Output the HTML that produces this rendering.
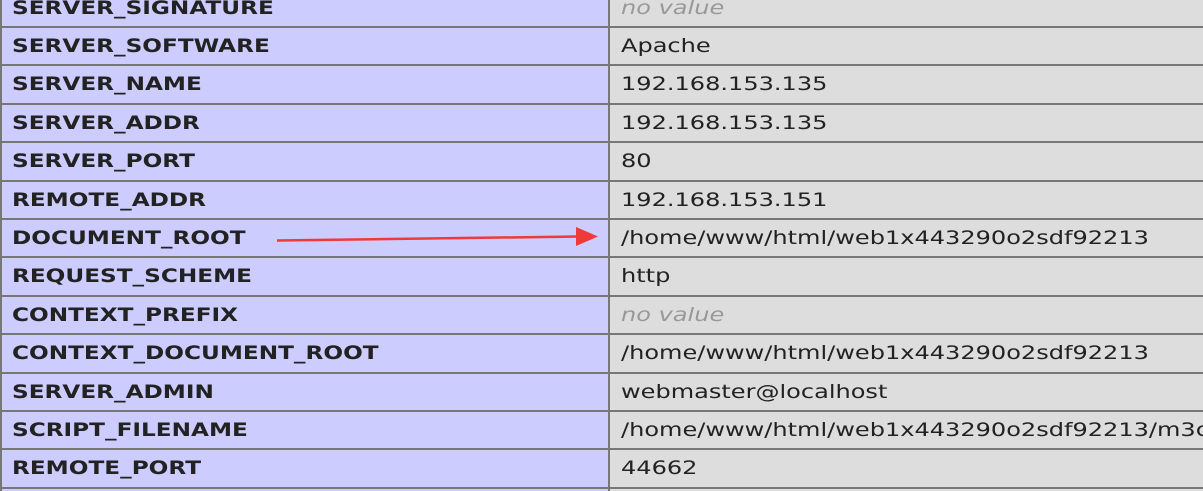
<!DOCTYPE html>
<html><head><style>
html,body{margin:0;padding:0;width:1203px;height:491px;overflow:hidden;background:#fff;position:relative;}
.r{position:absolute;left:0;width:1203px;height:38.4px;overflow:hidden;}
.l{position:absolute;left:0;top:0;width:606px;height:36.4px;background:#ccccff;border:1px solid #777;border-width:2px 0 0 2px;box-sizing:content-box;}
.v{position:absolute;left:608px;top:0;width:600px;height:36.4px;background:#dddddd;border-top:2px solid #777;border-left:2px solid #777;}
.t{position:absolute;top:0;line-height:37px;font-family:"DejaVu Sans","Liberation Sans",sans-serif;font-size:19px;color:#222;white-space:nowrap;transform-origin:0 50%;}
.l .t{left:10px;font-weight:bold;transform:scaleX(1.22);}
.v .t{left:11px;transform:scaleX(1.265);}
.nv{color:#999;font-style:italic;}
</style></head><body>
<div class="r" style="top:-12px"><div class="l"><span class="t">SERVER_SIGNATURE</span></div><div class="v"><span class="t nv">no value</span></div></div>
<div class="r" style="top:26px"><div class="l"><span class="t">SERVER_SOFTWARE</span></div><div class="v"><span class="t">Apache</span></div></div>
<div class="r" style="top:64.4px"><div class="l"><span class="t">SERVER_NAME</span></div><div class="v"><span class="t">192.168.153.135</span></div></div>
<div class="r" style="top:102.8px"><div class="l"><span class="t">SERVER_ADDR</span></div><div class="v"><span class="t">192.168.153.135</span></div></div>
<div class="r" style="top:141.2px"><div class="l"><span class="t">SERVER_PORT</span></div><div class="v"><span class="t">80</span></div></div>
<div class="r" style="top:179.6px"><div class="l"><span class="t">REMOTE_ADDR</span></div><div class="v"><span class="t">192.168.153.151</span></div></div>
<div class="r" style="top:218px"><div class="l"><span class="t">DOCUMENT_ROOT</span></div><div class="v"><span class="t">/home/www/html/web1x443290o2sdf92213</span></div></div>
<div class="r" style="top:256.4px"><div class="l"><span class="t">REQUEST_SCHEME</span></div><div class="v"><span class="t">http</span></div></div>
<div class="r" style="top:294.8px"><div class="l"><span class="t">CONTEXT_PREFIX</span></div><div class="v"><span class="t nv">no value</span></div></div>
<div class="r" style="top:333.2px"><div class="l"><span class="t">CONTEXT_DOCUMENT_ROOT</span></div><div class="v"><span class="t">/home/www/html/web1x443290o2sdf92213</span></div></div>
<div class="r" style="top:371.6px"><div class="l"><span class="t">SERVER_ADMIN</span></div><div class="v"><span class="t">webmaster@localhost</span></div></div>
<div class="r" style="top:410px"><div class="l"><span class="t">SCRIPT_FILENAME</span></div><div class="v"><span class="t">/home/www/html/web1x443290o2sdf92213/m3c</span></div></div>
<div class="r" style="top:448.4px"><div class="l"><span class="t">REMOTE_PORT</span></div><div class="v"><span class="t">44662</span></div></div>
<div class="r" style="top:486.8px;height:4.2px"><div class="l"></div><div class="v"></div></div>
<svg style="position:absolute;left:0;top:0" width="1203" height="491">
<line x1="277" y1="240.5" x2="580" y2="236.5" stroke="#f03a3a" stroke-width="2.5"/>
<polygon points="576,227 598,236.5 576,246" fill="#f03a3a"/>
</svg>
</body></html>
